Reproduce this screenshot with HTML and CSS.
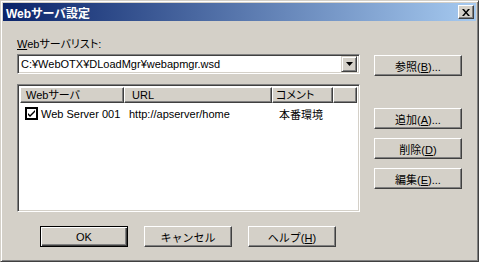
FILE: index.html
```html
<!DOCTYPE html>
<html lang="ja">
<head>
    <meta charset="UTF-8">
    <title>Webサーバ設定</title>
    <link rel="stylesheet" href="styles.css">
</head>
<body>
    <div class="window">
        <div class="titlebar">
            <span class="title">Webサーバ設定</span>
            <button class="close-btn">
                <svg width="8" height="7" viewBox="0 0 8 7">
                    <path d="M0 0h2l2 2.5 2-2.5h2l-3 3.5 3 3.5h-2l-2-2.5-2 2.5h-2l3-3.5z" fill="#000"/>
                </svg>
            </button>
        </div>

        <div class="content">
            <div class="left">
                <div class="label"><u>W</u>ebサーバリスト:</div>
                <div class="combo">
                    <span class="combo-text">C:¥WebOTX¥DLoadMgr¥webapmgr.wsd</span>
                    <span class="combo-arrow">
                        <svg width="7" height="4" viewBox="0 0 7 4"><path d="M0 0h7l-3.5 4z" fill="#000"/></svg>
                    </span>
                </div>
                <div class="listview">
                    <div class="lv-header">
                        <div class="col c1">Webサーバ</div>
                        <div class="col c2">URL</div>
                        <div class="col c3">コメント</div>
                        <div class="col c4"></div>
                    </div>
                    <div class="lv-row">
                        <div class="cell c1">
                            <span class="check">
                                <svg width="9" height="9" viewBox="0 0 9 9"><path d="M1 4l2 2 5-5v2l-5 5-2-2z" fill="#000"/></svg>
                            </span>
                            Web Server 001
                        </div>
                        <div class="cell c2">http://apserver/home</div>
                        <div class="cell c3">本番環境</div>
                    </div>
                </div>
            </div>
            <div class="right">
                <button class="btn btn-browse">参照(<u>B</u>)...</button>
                <button class="btn btn-add">追加(<u>A</u>)...</button>
                <button class="btn">削除(<u>D</u>)</button>
                <button class="btn">編集(<u>E</u>)...</button>
            </div>
        </div>

        <div class="footer">
            <button class="btn btn-default">OK</button>
            <button class="btn">キャンセル</button>
            <button class="btn btn-help">ヘルプ(<u>H</u>)</button>
        </div>
    </div>
</body>
</html>
```

FILE: styles.css
```css
body {
    margin: 0;
    background: #d4d0c8;
    font-family: "Liberation Sans", "Noto Sans CJK JP", sans-serif;
    font-size: 11px;
    font-feature-settings: "palt";
}
.window {
    width: 479px;
    height: 262px;
    box-sizing: border-box;
    background: #d4d0c8;
    border: 1px solid;
    border-color: #d4d0c8 #404040 #404040 #d4d0c8;
    box-shadow: inset 1px 1px #fff, inset -1px -1px #808080;
    padding: 2px;
    color: #000;
}
.titlebar {
    height: 18px;
    display: flex;
    align-items: center;
    justify-content: space-between;
    background: linear-gradient(to right, #0a246a, #a6caf0);
    padding: 0 2px 0 3px;
}
.title {
    color: #fff;
    font-weight: bold;
    font-size: 12px;
}
button {
    font-family: inherit;
    font-size: 11px;
    color: #000;
    margin: 0;
    padding: 0;
}
.close-btn {
    width: 16px;
    height: 14px;
    display: flex;
    align-items: center;
    justify-content: center;
    background: #d4d0c8;
    border: 1px solid;
    border-color: #fff #404040 #404040 #fff;
    box-shadow: inset -1px -1px #808080;
}
.content {
    display: flex;
    gap: 14px;
    padding: 17px 0 0 14px;
}
.left {
    width: 343px;
}
.label {
    height: 12px;
    line-height: 12px;
    margin-bottom: 4px;
}
.combo {
    height: 20px;
    box-sizing: border-box;
    display: flex;
    align-items: center;
    justify-content: space-between;
    background: #fff;
    border: 1px solid;
    border-color: #808080 #fff #fff #808080;
    box-shadow: inset 1px 1px #404040, inset -1px -1px #d4d0c8;
    padding: 0 2px 0 2px;
}
.combo-text {
    padding-left: 1px;
}
.combo-arrow {
    width: 16px;
    height: 16px;
    box-sizing: border-box;
    display: flex;
    align-items: center;
    justify-content: center;
    background: #d4d0c8;
    border: 1px solid;
    border-color: #d4d0c8 #404040 #404040 #d4d0c8;
    box-shadow: inset 1px 1px #fff, inset -1px -1px #808080;
}
.listview {
    margin-top: 10px;
    height: 128px;
    box-sizing: border-box;
    background: #fff;
    border: 1px solid;
    border-color: #808080 #fff #fff #808080;
    box-shadow: inset 1px 1px #404040, inset -1px -1px #d4d0c8;
    padding: 2px;
}
.lv-header {
    display: flex;
    height: 16px;
}
.col {
    box-sizing: border-box;
    height: 16px;
    line-height: 14px;
    background: #d4d0c8;
    border: 1px solid;
    border-color: #fff #404040 #404040 #fff;
    box-shadow: inset -1px -1px #808080;
    padding-left: 5px;
    white-space: nowrap;
}
.c1 { width: 104px; }
.c2 { width: 148px; }
.c3 { width: 61px; }
.col.c4 { flex: 1; }
.col.c2 { padding-left: 7px; }
.col.c3 { padding-left: 3px; }
.lv-row {
    display: flex;
    height: 15px;
    margin-top: 3px;
    align-items: center;
    white-space: nowrap;
}
.cell.c1 {
    display: flex;
    align-items: center;
    gap: 3px;
    padding-left: 5px;
    box-sizing: border-box;
}
.cell.c2 { padding-left: 5px; box-sizing: border-box; }
.cell.c3 { padding-left: 7px; box-sizing: border-box; }
.check {
    width: 13px;
    height: 13px;
    box-sizing: border-box;
    border: 2px solid #000;
    display: flex;
    align-items: center;
    justify-content: center;
    background: #fff;
}
.right {
    display: flex;
    flex-direction: column;
    padding-top: 17px;
}
.btn {
    width: 88px;
    height: 21px;
    box-sizing: border-box;
    background: #d4d0c8;
    border: 1px solid;
    border-color: #fff #404040 #404040 #fff;
    box-shadow: inset -1px -1px #808080;
    margin-bottom: 9px;
}
.btn-add {
    margin-top: 23px;
}
.footer {
    display: flex;
    gap: 16px;
    padding: 14px 0 0 37px;
}
.footer .btn {
    margin: 0;
}
.btn-default {
    border: 1px solid #000;
    box-shadow: inset 1px 1px #fff, inset -1px -1px #404040, inset -2px -2px #808080;
}
```
